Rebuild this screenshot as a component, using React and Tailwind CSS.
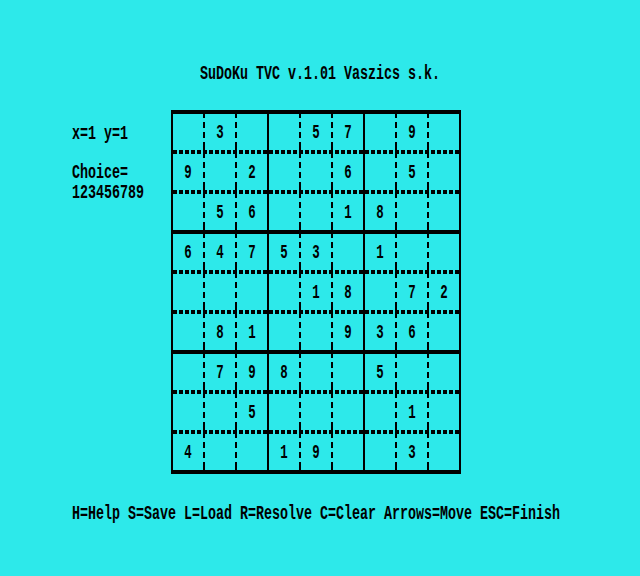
const puzzle = [
  "030057090",
  "902006050",
  "056001800",
  "647530100",
  "000018072",
  "081009360",
  "079800500",
  "005000010",
  "400190030",
];

const solid = [0, 3, 6, 9];
const dashed = [1, 2, 4, 5, 7, 8];

function Line({ children, className = "" }) {
  return (
    <div className={`leading-[20px] whitespace-pre ${className}`}>
      <span className="inline-block origin-left scale-x-[0.6667]">{children}</span>
    </div>
  );
}

function Board() {
  return (
    <div className="relative h-[364px] w-[290px] shrink-0">
      <div className="grid grid-cols-[repeat(9,32px)] grid-rows-[repeat(9,40px)]">
        {puzzle.map((row, r) =>
          row.split("").map((ch, c) => (
            <div key={`${r}-${c}`} className="flex justify-center pl-[2px] pt-[13px]">
              <span className="inline-block h-[20px] leading-[20px] scale-x-[0.62]">
                {ch === "0" ? "" : ch}
              </span>
            </div>
          )),
        )}
      </div>
      <svg
        className="absolute inset-0"
        width="290"
        height="364"
        viewBox="0 0 290 364"
        shapeRendering="crispEdges"
      >
        {solid.map((k) => (
          <rect key={`v${k}`} x={32 * k} y="0" width="2" height="364" fill="#000" />
        ))}
        {solid.map((j) => (
          <rect key={`h${j}`} x="0" y={40 * j} width="290" height="4" fill="#000" />
        ))}
        {dashed.map((k) => (
          <line
            key={`dv${k}`}
            x1={32 * k + 1}
            x2={32 * k + 1}
            y1="0"
            y2="364"
            stroke="#000"
            strokeWidth="2"
            strokeDasharray="16 4 6 4 6 4"
            strokeDashoffset="8"
          />
        ))}
        {dashed.map((j) => (
          <line
            key={`dh${j}`}
            x1="0"
            x2="290"
            y1={40 * j + 2}
            y2={40 * j + 2}
            stroke="#000"
            strokeWidth="4"
            strokeDasharray="4 2"
            strokeDashoffset="4"
          />
        ))}
      </svg>
    </div>
  );
}

export default function App() {
  return (
    <div className="flex h-[576px] w-[640px] flex-col overflow-hidden bg-[#2de9ea] font-['Liberation_Mono',monospace] text-[20px] font-bold text-black">
      <div className="pl-[200px] pt-[64px]">
        <Line>SuDoKu TVC v.1.01 Vaszics s.k.</Line>
      </div>

      <div className="mt-[26px] flex">
        <div className="w-[171px] shrink-0 pl-[72px] pt-[14px]">
          <Line>x=1 y=1</Line>
          <Line className="mt-[18.5px]">{"Choice=\n123456789"}</Line>
        </div>
        <Board />
      </div>

      <div className="mt-[29.5px] pl-[72px]">
        <Line>H=Help S=Save L=Load R=Resolve C=Clear Arrows=Move ESC=Finish</Line>
      </div>
    </div>
  );
}
